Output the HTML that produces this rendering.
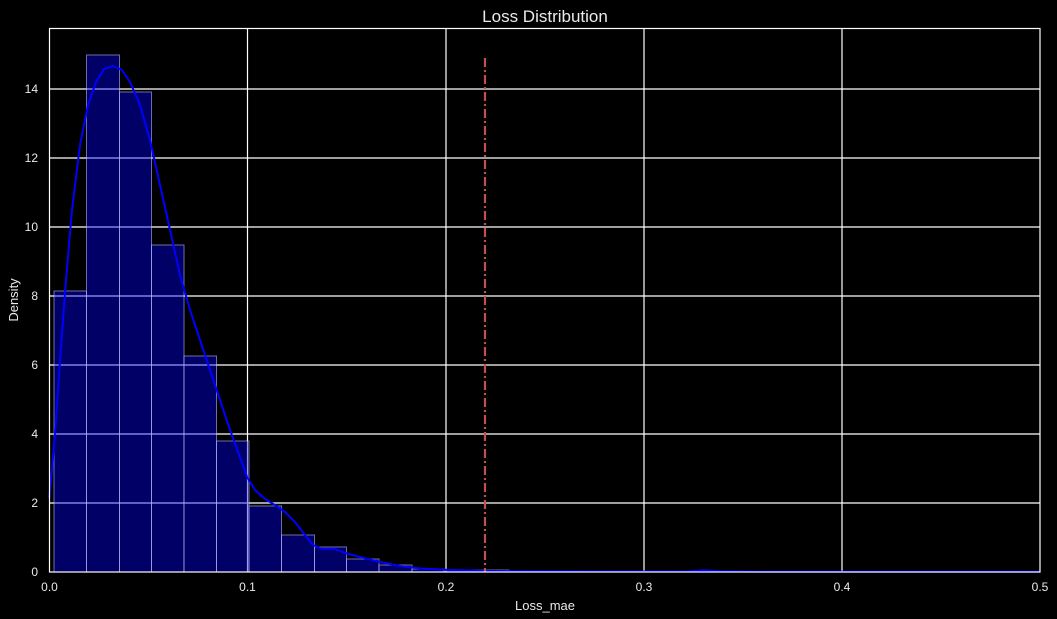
<!DOCTYPE html>
<html><head><meta charset="utf-8"><style>
html,body{margin:0;padding:0;background:#000;}
svg{display:block;}
text{font-family:"Liberation Sans",sans-serif;fill:#eaeaea;}
</style></head><body>
<svg width="1057" height="619" viewBox="0 0 1057 619" xmlns="http://www.w3.org/2000/svg">
<rect width="1057" height="619" fill="#000"/>
<g stroke="#fff" stroke-width="1.2">
<line x1="247.5" y1="28" x2="247.5" y2="572"/>
<line x1="446" y1="28" x2="446" y2="572"/>
<line x1="644" y1="28" x2="644" y2="572"/>
<line x1="842" y1="28" x2="842" y2="572"/>
<line x1="49" y1="503" x2="1040" y2="503"/>
<line x1="49" y1="434" x2="1040" y2="434"/>
<line x1="49" y1="365" x2="1040" y2="365"/>
<line x1="49" y1="296" x2="1040" y2="296"/>
<line x1="49" y1="227" x2="1040" y2="227"/>
<line x1="49" y1="158" x2="1040" y2="158"/>
<line x1="49" y1="89" x2="1040" y2="89"/>
</g>
<g fill="rgba(0,0,255,0.4)" stroke="rgba(200,200,255,0.55)" stroke-width="1">
<rect x="54" y="291" width="32.5" height="281"/>
<rect x="86.5" y="55" width="33" height="517"/>
<rect x="119.5" y="92" width="32" height="480"/>
<rect x="151.5" y="245" width="32.5" height="327"/>
<rect x="184" y="356" width="32.5" height="216"/>
<rect x="216.5" y="441" width="32.5" height="131"/>
<rect x="249" y="506" width="32.5" height="66"/>
<rect x="281.5" y="535" width="33" height="37"/>
<rect x="314.5" y="547" width="32" height="25"/>
<rect x="346.5" y="559" width="32.5" height="13"/>
<rect x="379" y="565" width="33" height="7"/>
<rect x="412" y="569" width="32" height="3"/>
<rect x="444" y="570" width="32.5" height="2"/>
<rect x="476.5" y="570" width="32.5" height="2"/>
</g>
<polyline fill="none" stroke="#0000ff" stroke-width="2" stroke-linejoin="round" points="49,498 52,470 56,420 60,360 66,280 72,210 80,145 88,105 96,82 104,69 113,66 122,70 130,82 140,105 150,140 160,185 170,230 180,275 190,310 200,340 210,370 220,400 230,430 240,457 247,477 255,490 265,499 275,505 285,512 295,522 305,535 313,545 322,549 335,549 345,553 360,557 380,562 400,566 420,568.5 450,570 490,571 600,571.5 685,571.5 704,570.3 722,571.3 760,571.7 1040,571.8"/>
<line x1="485" y1="58" x2="485" y2="572" stroke="#c44e52" stroke-width="2.2" stroke-dasharray="9,3,2,3"/>
<rect x="49.5" y="28.5" width="990.5" height="543.5" fill="none" stroke="#fff" stroke-width="1.2"/>
<g font-size="12" text-anchor="end">
<text x="38" y="576">0</text>
<text x="38" y="507">2</text>
<text x="38" y="438">4</text>
<text x="38" y="369">6</text>
<text x="38" y="300">8</text>
<text x="38" y="231">10</text>
<text x="38" y="162">12</text>
<text x="38" y="93">14</text>
</g>
<g font-size="12" text-anchor="middle">
<text x="49.5" y="591">0.0</text>
<text x="247.5" y="591">0.1</text>
<text x="446" y="591">0.2</text>
<text x="644" y="591">0.3</text>
<text x="842" y="591">0.4</text>
<text x="1040" y="591">0.5</text>
<text x="545" y="610" font-size="13">Loss_mae</text>
<text x="545" y="22" font-size="17">Loss Distribution</text>
<text transform="translate(18,300) rotate(-90)" font-size="13">Density</text>
</g>
</svg>
</body></html>
